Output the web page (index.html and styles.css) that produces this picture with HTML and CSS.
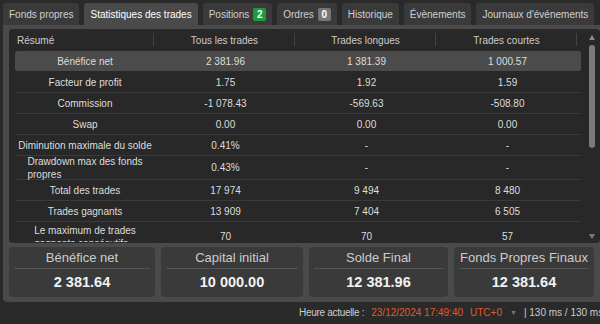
FILE: index.html
```html
<!DOCTYPE html>
<html>

<head>
    <meta charset="UTF-8">
    <title>Statistiques des trades</title>
    <link rel="stylesheet" href="styles.css">
</head>

<body>
    <div class="tabs">
        <div class="tab">Fonds propres</div>
        <div class="tab active">Statistiques des trades</div>
        <div class="tab">Positions <span class="badge green">2</span></div>
        <div class="tab">Ordres <span class="badge grey">0</span></div>
        <div class="tab">Historique</div>
        <div class="tab">Évènements</div>
        <div class="tab">Journaux d'événements</div>
    </div>

    <div class="panel">
        <div class="stats">
            <div class="stats-table">
                <div class="head">
                    <div class="col first">Résumé</div>
                    <div class="col">Tous les trades</div>
                    <div class="col">Trades longues</div>
                    <div class="col">Trades courtes</div>
                </div>
                <div class="body">
                    <div class="row selected">
                        <div class="col first"><span>Bénéfice net</span></div>
                        <div class="col">2 381.96</div>
                        <div class="col">1 381.39</div>
                        <div class="col">1 000.57</div>
                    </div>
                    <div class="row">
                        <div class="col first"><span>Facteur de profit</span></div>
                        <div class="col">1.75</div>
                        <div class="col">1.92</div>
                        <div class="col">1.59</div>
                    </div>
                    <div class="row">
                        <div class="col first"><span>Commission</span></div>
                        <div class="col">-1 078.43</div>
                        <div class="col">-569.63</div>
                        <div class="col">-508.80</div>
                    </div>
                    <div class="row">
                        <div class="col first"><span>Swap</span></div>
                        <div class="col">0.00</div>
                        <div class="col">0.00</div>
                        <div class="col">0.00</div>
                    </div>
                    <div class="row">
                        <div class="col first"><span>Diminution maximale du solde</span></div>
                        <div class="col">0.41%</div>
                        <div class="col">-</div>
                        <div class="col">-</div>
                    </div>
                    <div class="row tall">
                        <div class="col first"><span>Drawdown max des fonds<br>propres</span></div>
                        <div class="col">0.43%</div>
                        <div class="col">-</div>
                        <div class="col">-</div>
                    </div>
                    <div class="row">
                        <div class="col first"><span>Total des trades</span></div>
                        <div class="col">17 974</div>
                        <div class="col">9 494</div>
                        <div class="col">8 480</div>
                    </div>
                    <div class="row">
                        <div class="col first"><span>Trades gagnants</span></div>
                        <div class="col">13 909</div>
                        <div class="col">7 404</div>
                        <div class="col">6 505</div>
                    </div>
                    <div class="row taller">
                        <div class="col first"><span>Le maximum de trades<br>gagnants consécutifs</span></div>
                        <div class="col">70</div>
                        <div class="col">70</div>
                        <div class="col">57</div>
                    </div>
                </div>
            </div>
            <div class="scrollbar">
                <div class="arrow up"></div>
                <div class="track"><div class="thumb"></div></div>
                <div class="arrow down"></div>
            </div>
        </div>

        <div class="cards">
            <div class="card">
                <div class="card-title">Bénéfice net</div>
                <div class="card-value">2 381.64</div>
            </div>
            <div class="card">
                <div class="card-title">Capital initial</div>
                <div class="card-value">10 000.00</div>
            </div>
            <div class="card">
                <div class="card-title">Solde Final</div>
                <div class="card-value">12 381.96</div>
            </div>
            <div class="card">
                <div class="card-title">Fonds Propres Finaux</div>
                <div class="card-value">12 381.64</div>
            </div>
        </div>
    </div>

    <div class="status">
        <span class="label">Heure actuelle :</span>
        <span class="orange time">23/12/2024 17:49:40</span>
        <span class="orange zone">UTC+0</span>
        <span class="caret">▼</span>
        <span>| 130 ms / 130 ms</span>
    </div>
</body>

</html>
```

FILE: styles.css
```css
body {
    margin: 0;
    width: 600px;
    height: 324px;
    overflow: hidden;
    background-color: #2a2a2a;
    color: #dddddd;
    font-family: "Liberation Sans", Arial, sans-serif;
    font-size: 10px;
}

.tabs {
    display: flex;
    gap: 5px;
    padding: 3px 0 0 3px;
    height: 22px;
}

.tab {
    display: flex;
    align-items: center;
    gap: 4px;
    padding: 0 6px;
    background-color: #3a3a3a;
    color: #d0d0d0;
    border-radius: 3px 3px 0 0;
    white-space: nowrap;
}

.tab.active {
    background-color: #4a4a4a;
    color: #ffffff;
}

.badge {
    display: inline-block;
    width: 13px;
    height: 13px;
    line-height: 13px;
    text-align: center;
    border-radius: 2px;
    color: #ffffff;
    font-weight: 700;
    font-size: 10px;
}

.badge.green {
    background-color: #1e9a3e;
}

.badge.grey {
    background-color: #777777;
}

.panel {
    margin-left: 3px;
    width: 591px;
    padding: 4px 6px 5px 6px;
    background-color: #4a4a4a;
    border-radius: 0 0 4px 4px;
}

.stats {
    display: flex;
    height: 214px;
    background-color: #282828;
    border-radius: 4px;
    overflow: hidden;
}

.stats-table {
    flex: 1;
    padding: 0 0 0 1px;
}

.head {
    display: flex;
    height: 22px;
    color: #cccccc;
}

.head .col {
    display: flex;
    align-items: center;
    justify-content: center;
    width: 141px;
    position: relative;
}

.head .col.first {
    width: 144px;
    justify-content: flex-start;
    padding-left: 7px;
    box-sizing: border-box;
}

.head .col::after {
    content: "";
    position: absolute;
    right: 0;
    top: 4px;
    bottom: 5px;
    border-right: 1px solid #444444;
}

.body {
    height: 191px;
    overflow: hidden;
    padding: 0 5px;
}

.row {
    display: flex;
    height: 20px;
    border-bottom: 1px solid #3a3a3a;
}

.row.tall {
    height: 23px;
}

.row.taller {
    height: 28px;
    border-bottom: none;
}

.row.selected {
    background-color: #4b4b4b;
    border-radius: 3px;
    border-bottom-color: #282828;
}

.row .col {
    display: flex;
    align-items: center;
    justify-content: center;
    width: 141px;
    color: #dddddd;
}

.row .col.first {
    width: 140px;
    padding: 0 5px;
    box-sizing: border-box;
    white-space: nowrap;
}

.row .col.first span {
    display: inline-block;
    text-align: left;
    line-height: 13px;
}

.row.taller .col.first span {
    padding-top: 2px;
}

.scrollbar {
    display: flex;
    flex-direction: column;
    align-items: center;
    width: 12px;
    padding: 4px 0 1px 0;
    margin-right: 2px;
}

.arrow {
    width: 0;
    height: 0;
    border-left: 3px solid transparent;
    border-right: 3px solid transparent;
}

.arrow.up {
    border-bottom: 5px solid #8a8a8a;
    margin-top: 2px;
}

.arrow.down {
    border-top: 5px solid #7a7a7a;
    margin-bottom: 3px;
}

.track {
    flex: 1;
    width: 6px;
    padding-top: 5px;
}

.thumb {
    height: 103px;
    background-color: #7a7a7a;
    border-radius: 3px;
}

.cards {
    display: grid;
    grid-template-columns: 146px 142px 139px 140px;
    gap: 0 6px;
    margin-top: 4px;
}

.card {
    height: 50px;
    background-color: #3a3a3a;
    border-radius: 4px;
    padding: 0 5px;
}

.card-title {
    height: 21px;
    line-height: 22px;
    text-align: center;
    font-size: 13px;
    color: #cccccc;
    border-bottom: 1px solid #555555;
}

.card-value {
    height: 26px;
    line-height: 26px;
    text-align: center;
    font-size: 14.5px;
    font-weight: 700;
    color: #f2f2f2;
}

.status {
    display: flex;
    align-items: center;
    height: 21px;
    padding-left: 299px;
    color: #cccccc;
    white-space: nowrap;
}

.status .label {
    letter-spacing: -0.3px;
}

.status .orange {
    color: #e05a2b;
}

.status .time {
    margin-left: 7px;
}

.status .zone {
    margin-left: 7px;
}

.caret {
    color: #777777;
    font-size: 7px;
    margin: 0 7px 0 8px;
}
```
